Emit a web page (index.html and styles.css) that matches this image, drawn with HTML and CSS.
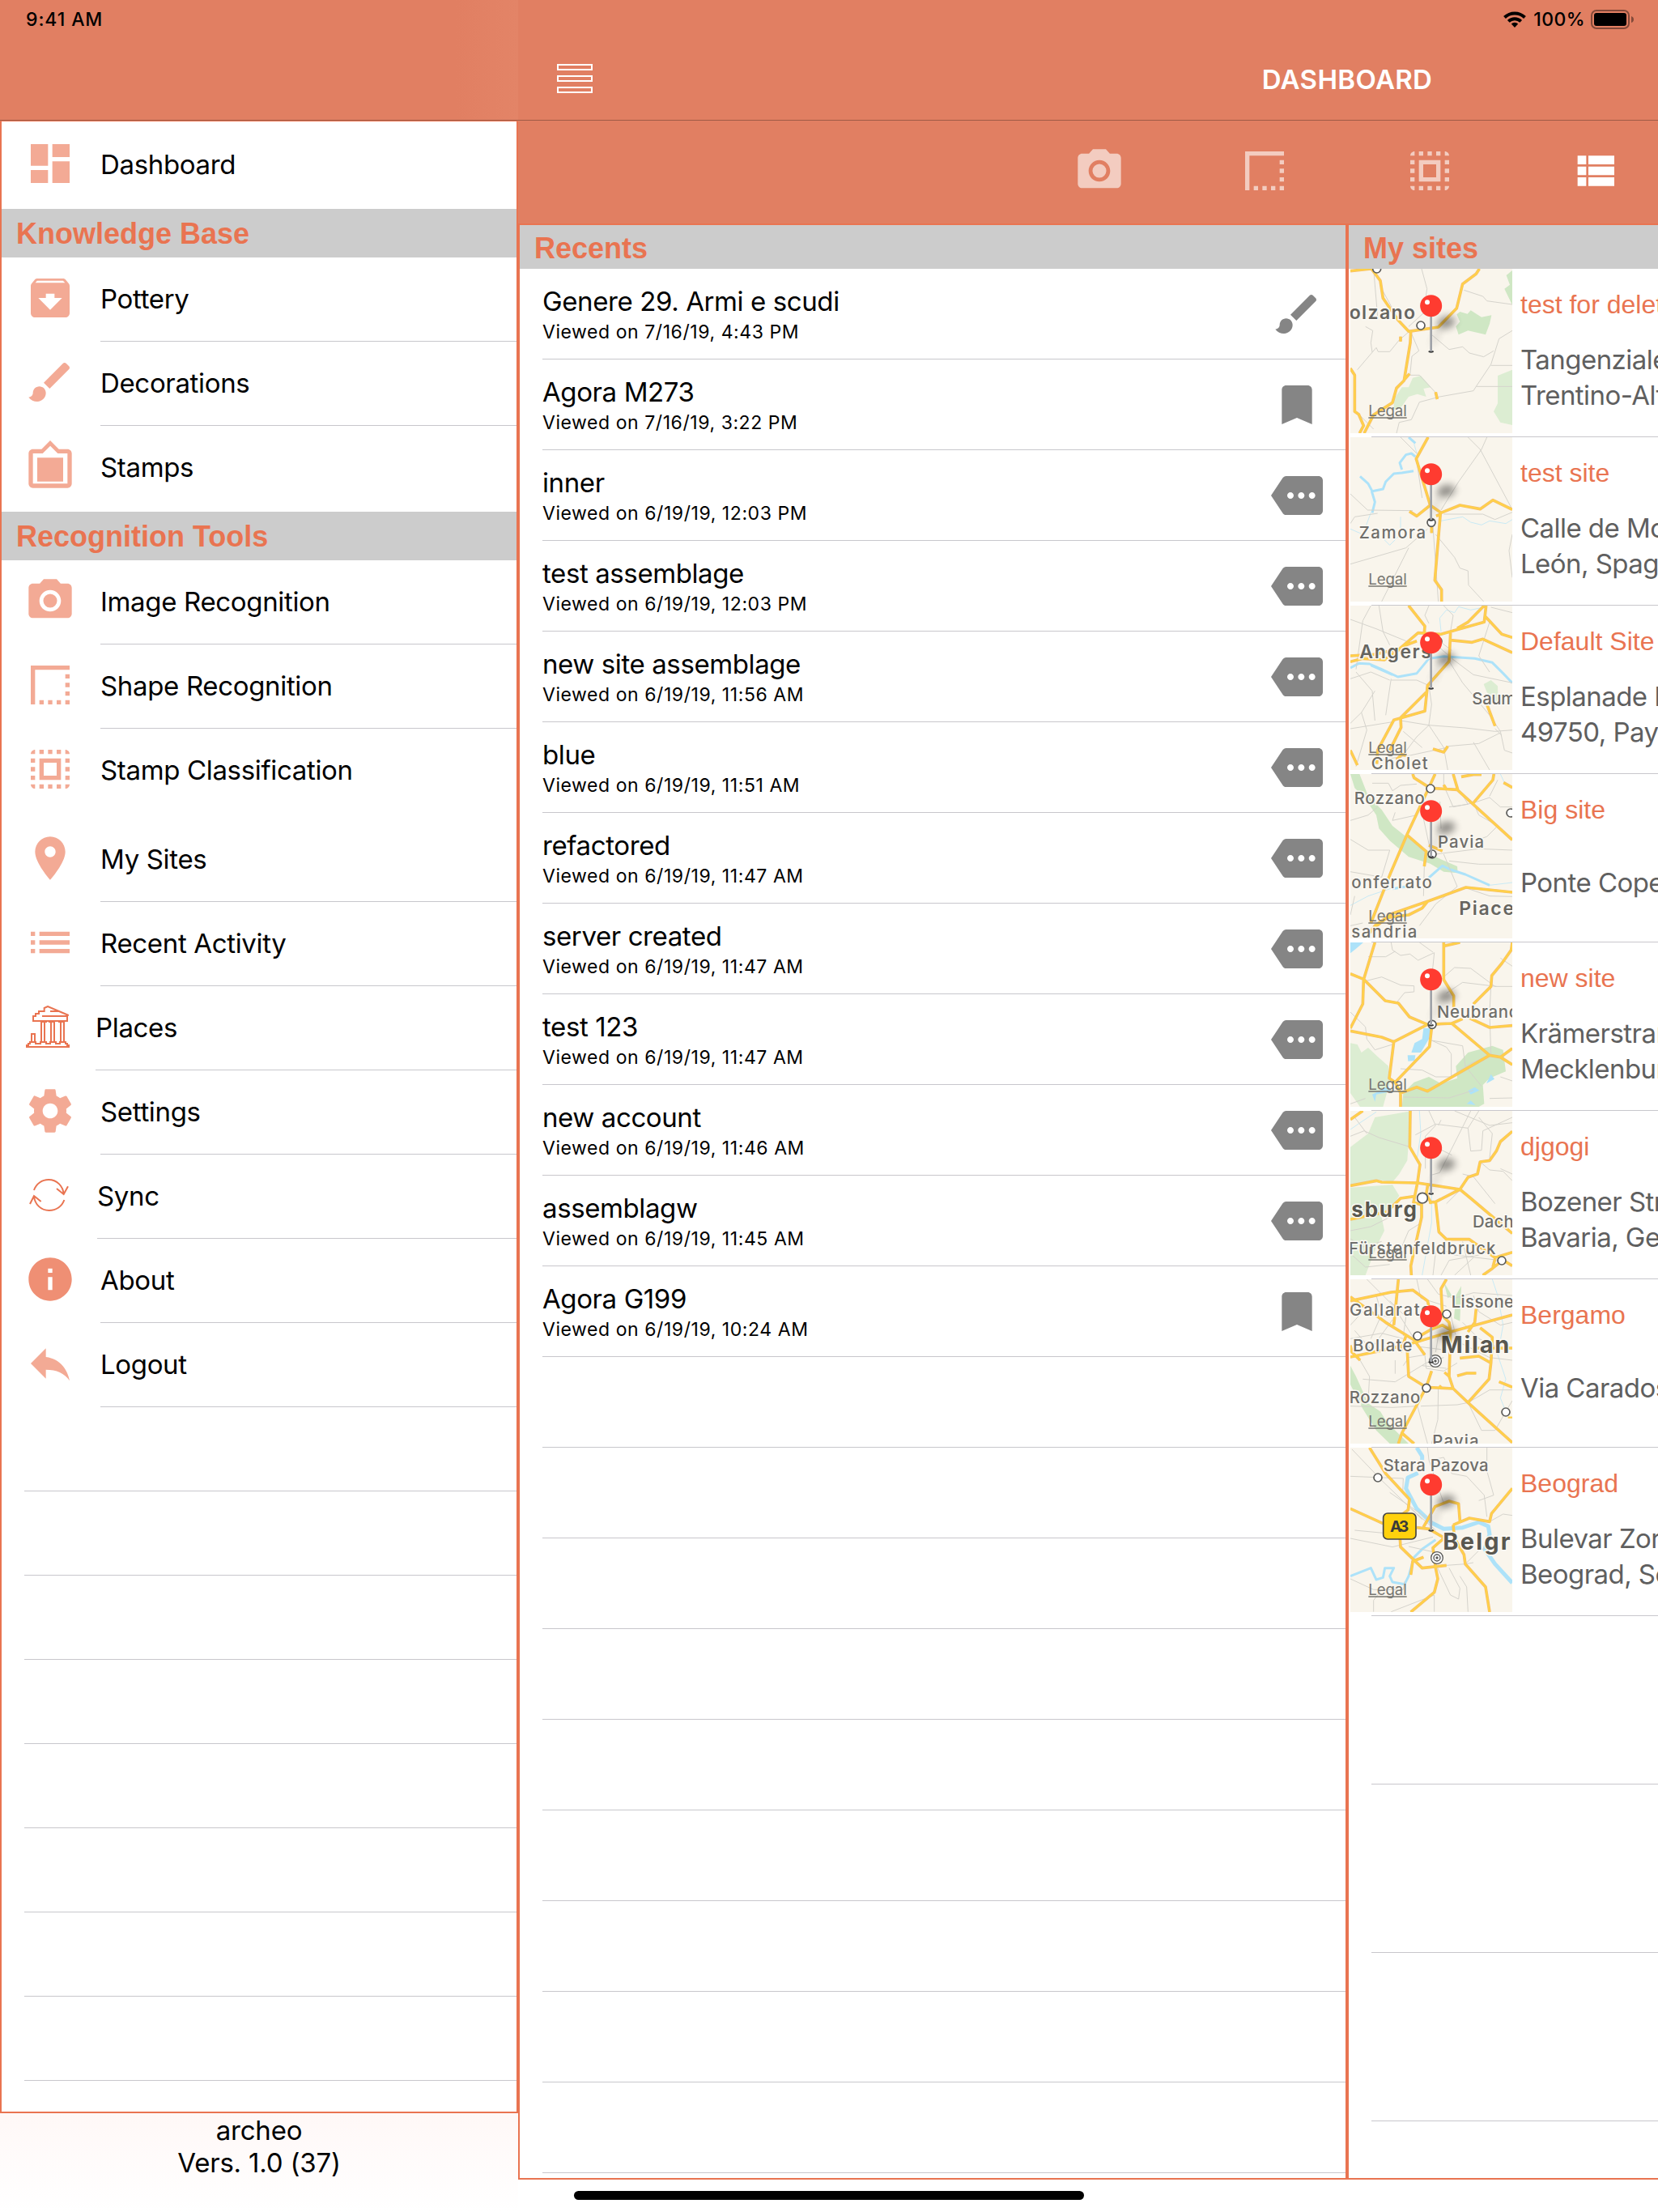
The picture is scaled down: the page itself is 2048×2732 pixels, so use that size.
FILE: index.html
```html
<!DOCTYPE html>
<html lang="en">
<head>
  <meta charset="UTF-8">
  <meta name="viewport" content="width=device-width, initial-scale=1.0">
  <title>Dashboard</title>
  <link rel="stylesheet" href="styles.css">
</head>
<body>

  <!-- Shared icons -->
  <svg class="defs" width="0" height="0">
    <defs>
      <filter id="blur" x="-100%" y="-150%" width="300%" height="400%"><feGaussianBlur stdDeviation="14"/></filter>

      <symbol id="i-dashboard" viewBox="0 0 24 24"><path d="M3 13h8V3H3v10zm0 8h8v-6H3v6zm10 0h8V11h-8v10zm0-18v6h8V3h-8z"/></symbol>
      <symbol id="i-archive" viewBox="0 0 24 24"><path d="M20.54 5.23l-1.39-1.68C18.88 3.21 18.47 3 18 3H6c-.47 0-.88.21-1.16.55L3.46 5.23C3.17 5.57 3 6.02 3 6.5V19c0 1.1.9 2 2 2h14c1.1 0 2-.9 2-2V6.5c0-.48-.17-.93-.46-1.27zM12 17.5L6.5 12H10v-2h4v2h3.5L12 17.5zM5.12 5l.81-1h12l.94 1H5.12z"/></symbol>
      <symbol id="i-brush" viewBox="0 0 24 24"><path d="M7 14c-1.66 0-3 1.34-3 3 0 1.31-1.16 2-2 2 .92 1.22 2.49 2 4 2 2.21 0 4-1.79 4-4 0-1.66-1.34-3-3-3zm13.71-9.37l-1.34-1.34c-.39-.39-1.02-.39-1.41 0L9 12.25 11.75 15l8.96-8.96c.39-.39.39-1.02 0-1.41z"/></symbol>
      <symbol id="i-frame" viewBox="0 0 24 24"><path d="M20 4h-4l-4-4-4 4H4c-1.1 0-2 .9-2 2v14c0 1.1.9 2 2 2h16c1.1 0 2-.9 2-2V6c0-1.1-.9-2-2-2zm0 16H4V6h4.52l3.52-3.5L15.48 6H20v14zM18 8H6v11h12"/></symbol>
      <symbol id="i-camera" viewBox="0 0 24 24"><circle cx="12" cy="12" r="3.2"/><path d="M9 2L7.17 4H4c-1.1 0-2 .9-2 2v12c0 1.1.9 2 2 2h16c1.1 0 2-.9 2-2V6c0-1.1-.9-2-2-2h-3.17L15 2H9zm3 15c-2.76 0-5-2.24-5-5s2.24-5 5-5 5 2.24 5 5-2.24 5-5 5z"/></symbol>
      <symbol id="i-shape" viewBox="0 0 24 24"><path d="M15 21h2v-2h-2v2zm4 0h2v-2h-2v2zM7 21h2v-2H7v2zm4 0h2v-2h-2v2zm8-4h2v-2h-2v2zm0-4h2v-2h-2v2zM3 3v18h2V5h16V3H3zm16 6h2V7h-2v2z"/></symbol>
      <symbol id="i-stamp" viewBox="0 0 24 24"><path d="M3 5h2V3c-1.1 0-2 .9-2 2zm0 8h2v-2H3v2zm4 8h2v-2H7v2zM3 9h2V7H3v2zm10-6h-2v2h2V3zm6 0v2h2c0-1.1-.9-2-2-2zM5 21v-2H3c0 1.1.9 2 2 2zm-2-4h2v-2H3v2zM9 3H7v2h2V3zm2 18h2v-2h-2v2zm8-8h2v-2h-2v2zm0 8c1.1 0 2-.9 2-2h-2v2zm0-12h2V7h-2v2zm0 8h2v-2h-2v2zm-4 4h2v-2h-2v2zm0-16h2V3h-2v2zM7 17h10V7H7v10zm2-8h6v6H9V9z"/></symbol>
      <symbol id="i-place" viewBox="0 0 24 24"><path d="M12 2C8.13 2 5 5.13 5 9c0 5.25 7 13 7 13s7-7.75 7-13c0-3.87-3.13-7-7-7zm0 9.5c-1.38 0-2.5-1.12-2.5-2.5s1.12-2.5 2.5-2.5 2.5 1.12 2.5 2.5-1.12 2.5-2.5 2.5z"/></symbol>
      <symbol id="i-list" viewBox="0 0 24 24"><path d="M3 13h2v-2H3v2zm0 4h2v-2H3v2zm0-8h2V7H3v2zm4 4h14v-2H7v2zm0 4h14v-2H7v2zM7 7v2h14V7H7z"/></symbol>
      <symbol id="i-settings" viewBox="0 0 24 24"><path d="M19.43 12.98c.04-.32.07-.64.07-.98s-.03-.66-.07-.98l2.11-1.65c.19-.15.24-.42.12-.64l-2-3.46c-.12-.22-.39-.3-.61-.22l-2.49 1c-.52-.4-1.08-.73-1.69-.98l-.38-2.65C14.46 2.18 14.25 2 14 2h-4c-.25 0-.46.18-.49.42l-.38 2.65c-.61.25-1.17.59-1.69.98l-2.49-1c-.23-.09-.49 0-.61.22l-2 3.46c-.13.22-.07.49.12.64l2.11 1.65c-.04.32-.07.65-.07.98s.03.66.07.98l-2.11 1.65c-.19.15-.24.42-.12.64l2 3.46c.12.22.39.3.61.22l2.49-1c.52.4 1.08.73 1.69.98l.38 2.65c.03.24.24.42.49.42h4c.25 0 .46-.18.49-.42l.38-2.65c.61-.25 1.17-.59 1.69-.98l2.49 1c.23.09.49 0 .61-.22l2-3.46c.12-.22.07-.49-.12-.64l-2.11-1.65zM12 15.5c-1.93 0-3.5-1.57-3.5-3.5s1.57-3.5 3.5-3.5 3.5 1.57 3.5 3.5-1.57 3.5-3.5 3.5z"/></symbol>
      <symbol id="i-info" viewBox="0 0 24 24"><path d="M12 2C6.48 2 2 6.48 2 12s4.48 10 10 10 10-4.48 10-10S17.52 2 12 2zm1 15h-2v-6h2v6zm0-8h-2V7h2v2z"/></symbol>
      <symbol id="i-reply" viewBox="0 0 24 24"><path d="M10 9V5l-7 7 7 7v-4.1c5 0 8.5 1.6 11 5.1-1-5-4-10-11-11z"/></symbol>
      <symbol id="i-viewlist" viewBox="0 0 24 24"><path d="M4 14h4v-4H4v4zm0 5h4v-4H4v4zM4 9h4V5H4v4zm5 5h12v-4H9v4zm0 5h12v-4H9v4zM9 5v4h12V5H9z"/></symbol>
      <symbol id="i-bookmark" viewBox="0 0 24 24"><path d="M17 3H7c-1.1 0-2 .9-2 2v16l7-3 7 3V5c0-1.1-.9-2-2-2z"/></symbol>
      <symbol id="i-more" viewBox="0 0 24 24"><path d="M22 3H7c-.69 0-1.23.35-1.59.88L0 12l5.41 8.11c.36.53.9.89 1.59.89h15c1.1 0 2-.9 2-2V5c0-1.1-.9-2-2-2zM9 13.5c-.83 0-1.5-.67-1.5-1.5s.67-1.5 1.5-1.5 1.5.67 1.5 1.5-.67 1.5-1.5 1.5zm5 0c-.83 0-1.5-.67-1.5-1.5s.67-1.5 1.5-1.5 1.5.67 1.5 1.5-.67 1.5-1.5 1.5zm5 0c-.83 0-1.5-.67-1.5-1.5s.67-1.5 1.5-1.5 1.5.67 1.5 1.5-.67 1.5-1.5 1.5z"/></symbol>

      <!-- Map pin -->
      <g id="pin">
        <text class="legal" x="67" y="547" textLength="142">Legal</text>
        <path d="M67 552h142" stroke="#777671" stroke-width="4"/>
        <ellipse cx="355" cy="199" rx="34" ry="22" transform="rotate(-14 355 199)" fill="#000" opacity=".42" filter="url(#blur)"/>
        <ellipse cx="318" cy="250" rx="10" ry="40" transform="rotate(24 318 250)" fill="#000" opacity=".12" filter="url(#blur)"/>
        <ellipse cx="299" cy="307" rx="10" ry="4" fill="#3c3c3c"/>
        <path d="M299 170v136" stroke="#9fa2a8" stroke-width="8"/>
        <circle cx="299" cy="137" r="40.5" fill="#ff3b30"/>
        <circle cx="285" cy="124" r="9" fill="#fff"/>
      </g>
      <g id="capital">
        <circle r="22" fill="#fff" stroke="#5a5a58" stroke-width="4"/>
        <circle r="12" fill="#fff" stroke="#5a5a58" stroke-width="4"/>
        <circle r="5" fill="#5a5a58"/>
      </g>
    </defs>
  </svg>

  <div class="screen">

    <div class="status">
      <span>9:41 AM</span>
      <div class="status-right">
        <svg width="28" height="21" viewBox="0 0 28 21" fill="none" stroke="#000" stroke-width="4">
          <path d="M1.5 7.5a18 18 0 0 1 25 0M6.3 12.4a11.2 11.2 0 0 1 15.4 0"/>
          <path d="M14 20l-4.2-4.6a6 6 0 0 1 8.4 0z" fill="#000" stroke="none"/>
        </svg>
        <span class="percent">100%</span>
        <svg width="54" height="24" viewBox="0 0 54 24">
          <rect x="1" y="1" width="46" height="22" rx="6" fill="none" stroke="#000" stroke-opacity=".42" stroke-width="2"/>
          <rect x="4" y="4" width="40" height="16" rx="3" fill="#000"/>
          <path d="M50 8q3 1 3 4t-3 4z" fill="#000" fill-opacity=".42"/>
        </svg>
      </div>
    </div>

    <aside class="sidebar">
      <div class="navbar"></div>

      <div class="menu">
        <div class="group">
          <div class="item"><svg class="icon"><use href="#i-dashboard"/></svg><span>Dashboard</span></div>
        </div>

        <h2>Knowledge Base</h2>
        <div class="group">
          <div class="item"><svg class="icon"><use href="#i-archive"/></svg><span>Pottery</span></div>
          <div class="item"><svg class="icon"><use href="#i-brush"/></svg><span>Decorations</span></div>
          <div class="item"><svg class="icon"><use href="#i-frame"/></svg><span>Stamps</span></div>
        </div>

        <h2>Recognition Tools</h2>
        <div class="group">
          <div class="item"><svg class="icon"><use href="#i-camera"/></svg><span>Image Recognition</span></div>
          <div class="item"><svg class="icon"><use href="#i-shape"/></svg><span>Shape Recognition</span></div>
          <div class="item"><svg class="icon"><use href="#i-stamp"/></svg><span>Stamp Classification</span></div>
        </div>

        <div class="group last">
          <div class="item"><svg class="icon"><use href="#i-place"/></svg><span>My Sites</span></div>
          <div class="item"><svg class="icon"><use href="#i-list"/></svg><span>Recent Activity</span></div>
          <div class="item places">
            <svg class="icon" viewBox="0 0 162 156">
              <path d="M27 57V39H36V30H48V21H68V9L81 3L158 36H153V57ZM60 39H156M90 21H120M54 60H78M84 60H108M120 60H144M57 63V133M69 63V133M93 63V133M105 63V133M129 63V133M141 63V133"/>
              <path d="M3 153H159V147H153V141H147V135H126V141H111V135H90V141H75V135H54V141H36V135H15V141H9V147H3ZM21 135V105H33V135"/>
            </svg>
            <span>Places</span>
          </div>
          <div class="item"><svg class="icon"><use href="#i-settings"/></svg><span>Settings</span></div>
          <div class="item sync">
            <svg class="icon" viewBox="0 0 156 120">
              <path d="M18 42C26 18 48 3 72 3C102 3 126 26 128 57M102 36L128 57L144 28M130 78C122 102 100 117 74 117C44 117 20 94 18 63M3 93L18 63L44 84"/>
            </svg>
            <span>Sync</span>
          </div>
          <div class="item about"><svg class="icon"><use href="#i-info"/></svg><span>About</span></div>
          <div class="item"><svg class="icon"><use href="#i-reply"/></svg><span>Logout</span></div>
        </div>

        <div class="empty"></div>
        <div class="empty"></div>
        <div class="empty"></div>
        <div class="empty"></div>
        <div class="empty"></div>
        <div class="empty"></div>
        <div class="empty"></div>
        <div class="empty"></div>
      </div>

      <div class="version">archeo<br>Vers. 1.0 (37)</div>
    </aside>

    <main class="main">
      <div class="navbar">
        <div class="hamburger"><i></i><i></i><i></i></div>
        <h1>DASHBOARD</h1>
      </div>

      <div class="toolbar">
        <svg class="icon"><use href="#i-camera"/></svg>
        <svg class="icon"><use href="#i-shape"/></svg>
        <svg class="icon"><use href="#i-stamp"/></svg>
        <svg class="icon active"><use href="#i-viewlist"/></svg>
      </div>

      <div class="panels">
        <section class="panel recents">
          <h2>Recents</h2>
          <div class="row"><div><b>Genere 29. Armi e scudi</b><small>Viewed on 7/16/19, 4:43 PM</small></div><svg class="icon"><use href="#i-brush"/></svg></div>
          <div class="row"><div><b>Agora M273</b><small>Viewed on 7/16/19, 3:22 PM</small></div><svg class="icon"><use href="#i-bookmark"/></svg></div>
          <div class="row"><div><b>inner</b><small>Viewed on 6/19/19, 12:03 PM</small></div><svg class="icon"><use href="#i-more"/></svg></div>
          <div class="row"><div><b>test assemblage</b><small>Viewed on 6/19/19, 12:03 PM</small></div><svg class="icon"><use href="#i-more"/></svg></div>
          <div class="row"><div><b>new site assemblage</b><small>Viewed on 6/19/19, 11:56 AM</small></div><svg class="icon"><use href="#i-more"/></svg></div>
          <div class="row"><div><b>blue</b><small>Viewed on 6/19/19, 11:51 AM</small></div><svg class="icon"><use href="#i-more"/></svg></div>
          <div class="row"><div><b>refactored</b><small>Viewed on 6/19/19, 11:47 AM</small></div><svg class="icon"><use href="#i-more"/></svg></div>
          <div class="row"><div><b>server created</b><small>Viewed on 6/19/19, 11:47 AM</small></div><svg class="icon"><use href="#i-more"/></svg></div>
          <div class="row"><div><b>test 123</b><small>Viewed on 6/19/19, 11:47 AM</small></div><svg class="icon"><use href="#i-more"/></svg></div>
          <div class="row"><div><b>new account</b><small>Viewed on 6/19/19, 11:46 AM</small></div><svg class="icon"><use href="#i-more"/></svg></div>
          <div class="row"><div><b>assemblagw</b><small>Viewed on 6/19/19, 11:45 AM</small></div><svg class="icon"><use href="#i-more"/></svg></div>
          <div class="row"><div><b>Agora G199</b><small>Viewed on 6/19/19, 10:24 AM</small></div><svg class="icon"><use href="#i-bookmark"/></svg></div>
          <div class="row"></div>
          <div class="row"></div>
          <div class="row"></div>
          <div class="row"></div>
          <div class="row"></div>
          <div class="row"></div>
          <div class="row"></div>
          <div class="row"></div>
          <div class="row"></div>
        </section>

        <section class="panel sites">
          <h2>My sites</h2>

          <div class="site">
            <svg class="map" viewBox="384 216 600 609">
              <path class="wood" d="M962 240L984 222V350L955 290L975 275ZM775 430L790 412L778 385L790 375L818 383L830 370L870 395L907 388L900 420L885 460L820 445L785 460Z"/>
              <path class="park" d="M545 700L575 655H600L615 620L645 612L683 655L655 660L665 690L632 680L600 690L575 725L545 738ZM930 612L984 590V795L940 785L915 745L930 715Z"/>
              <path class="road" d="M648 216L668 290L655 380L600 430M470 216L486 405M500 290L560 400M805 295L875 318L890 335L984 348M685 460L750 515L800 505L825 528L878 542L915 520M984 445L935 475L905 570L850 652L840 668L715 690L640 710L610 775L565 785L555 825M905 574H984M850 652H984M440 430L467 445L460 490L465 525M410 590L480 508L487 523H530L565 480L600 450M610 455L638 520L612 540L605 610H640L700 675M420 760L470 810"/>
              <g class="hw"><path id="h1" d="M384 224L460 216M462 216L495 260L505 325L560 405L600 448L710 432L778 362L800 272L850 235L862 216M608 450L606 490L583 630L555 658L540 712L470 757L435 825M583 628L603 605M384 585L400 610V745L415 755L433 797L418 825M570 467v18M700 673l6 26"/></g>
              <use href="#h1" class="hw-in"/>
              <g class="town"><circle cx="482" cy="216" r="15"/><circle cx="645" cy="426" r="15"/></g>
              <text class="city" x="380" y="402" textLength="244">olzano</text>
              <use href="#pin" x="384" y="216"/>
            </svg>
            <div class="info"><b>test for delete</b><p>Tangenziale Ovest<br>Trentino-Alto Adige</p></div>
          </div>

          <div class="site">
            <svg class="map" viewBox="384 840 600 609">
              <path class="water" d="M600 840L625 862M420 985L450 1012L465 1040L505 1032L515 1005L545 975L575 972L618 965M575 960L567 935L590 905L610 900L625 912M463 1040L475 1080L465 1120"/>
              <path class="stream" d="M384 1180L430 1200L460 1120M500 1210L530 1240L570 1200V1135M720 1150L800 1135L830 1155L870 1165L900 1150L960 1160L984 1145M620 865L632 905"/>
              <path class="road" d="M570 840L630 900M820 840L865 885L984 1108M890 840L870 885L785 1005L720 1110M384 1050L448 1110L615 1112M384 1160L400 1135L485 1122M384 1310L590 1250L670 1180M600 1250L500 1449M690 1170L710 1449M700 1200L770 1285L790 1325L820 1335L822 1388L878 1449M730 1125L875 1125L920 1145L984 1118M984 1200L972 1260L984 1360M630 930L650 1065"/>
              <g class="hw"><path id="h2" d="M672 840L628 920L680 1092L720 1120L790 1092L865 1106L912 1073L984 1108M603 1115L630 1132L680 1092M718 1120L697 1370L722 1405V1449M685 1150v45M702 1132L720 1125"/></g>
              <use href="#h2" class="hw-in"/>
              <g class="town"><circle cx="684" cy="1156" r="15"/></g>
              <text x="416" y="1214" textLength="247">Zamora</text>
              <use href="#pin" x="384" y="840"/>
            </svg>
            <div class="info"><b>test site</b><p>Calle de Monsalve<br>León, Spagna</p></div>
          </div>

          <div class="site">
            <svg class="map" viewBox="84 54 600 609">
              <path class="park" d="M578 345L605 330L630 352L632 420L590 375Z"/>
              <path class="water" d="M84 285L115 268L155 270L200 290L260 318L330 305L375 250L430 242L545 250L610 265L650 305L684 340M160 275L240 310"/>
              <path class="stream" d="M420 150L415 100L440 70L470 80L485 58L530 70L580 60"/>
              <path class="road" d="M160 54L130 110L105 290M190 54L205 150L230 200M84 105L180 140L290 185M375 54L360 90L375 120M430 54L465 90L455 150M605 60L684 80M600 115L560 240L600 300M230 330L160 300L84 325M105 300L165 370L175 480M235 325L215 460M235 330H330L375 350M375 350L385 420L375 495M84 490L125 450L175 370M125 450L145 515L105 650M84 510L240 485M270 480L375 497L510 507L620 520L684 515M375 497L330 540L270 620M375 497L430 580L445 663M445 575L560 565L640 525M440 580L300 610L200 625M450 260L500 340L600 460L640 520L655 590L684 600M460 250L540 310L684 340M540 560L600 663M280 520L350 580M620 510L645 535M420 190L460 220M415 210L450 240"/>
              <g class="hw"><path id="h3" d="M300 54L360 130L358 155M84 240L170 235L265 215L335 155L420 160L580 115L587 54M455 155L450 260L370 350L360 445L245 478L185 590L182 640M480 138L520 115L580 54M585 95L645 160L684 172M455 182L535 190L575 178L684 228M84 262L130 250L210 255L290 200L330 185M365 375L270 470L272 505L230 590M590 420L620 500M84 590L110 645M390 585L430 597L445 575M255 625L275 605L290 610"/></g>
              <use href="#h3" class="hw-in"/>
              <g class="town"><circle cx="409" cy="186" r="14"/></g>
              <text class="city" x="118" y="250" textLength="266">Angers</text>
              <text x="535" y="420" textLength="162">Saum</text>
              <text x="161" y="660" textLength="210">Cholet</text>
              <use href="#pin" x="84" y="54"/>
            </svg>
            <div class="info"><b>Default Site</b><p>Esplanade Lac<br>49750, Pays de la Loire</p></div>
          </div>

          <div class="site">
            <svg class="map" viewBox="84 678 600 609">
              <path class="wood" d="M84 678H118L150 760L200 810L240 870L290 910L340 940L400 985L480 1020L482 1045L430 1040L380 1010L300 985L230 925L190 880L180 830L140 770L100 730Z"/>
              <path class="water" d="M240 1103L290 1095M375 1062L425 1018L455 1032L510 1050L600 1090"/>
              <path class="stream" d="M84 1165L150 1130L240 1100M600 1090L684 1080M640 678L655 710"/>
              <path class="road" d="M84 850L150 830L185 800M165 712L225 712L240 740L270 720L330 715M430 678V720L465 800L540 785M250 820L240 850L330 830M350 820L378 950M84 920L150 960L230 960L200 1060L84 1040M100 1130L84 1200M480 736L540 785L600 765L640 800L684 800M540 785L560 830L630 870L590 910L560 920M400 975L560 955L684 960M430 975L480 1095L400 1160L340 1240M450 1000L560 1012L684 1012M358 1020L355 1130M512 1100L600 1130L684 1132M490 740L520 790L450 800M630 700L600 760M416 780L420 880M84 1240L130 1230"/>
              <g class="hw"><path id="h4" d="M315 678L320 692L380 730L480 736L684 922M398 678L365 750L295 900L235 1040L160 1230M465 678L482 736M430 718L440 735M495 688L540 680H570M616 678L612 700L540 785M652 710L684 728M295 905L365 965L358 1020M375 942L425 963M140 1287L175 1240L240 1195L370 1150L512 1098L684 1116M370 1150L350 1175L300 1200L220 1210L170 1250"/></g>
              <use href="#h4" class="hw-in"/>
              <g class="town"><circle cx="381" cy="732" r="15"/><circle cx="387" cy="975" r="15"/><circle cx="678" cy="822" r="15"/></g>
              <text x="98" y="788" textLength="261">Rozzano</text>
              <text x="408" y="951" textLength="171">Pavia</text>
              <text x="88" y="1100" textLength="298">onferrato</text>
              <text class="city" x="487" y="1200" textLength="203">Piace</text>
              <text x="88" y="1283" textLength="243">sandria</text>
              <use href="#pin" x="84" y="678"/>
            </svg>
            <div class="info"><b>Big site</b><p>Ponte Coperto</p></div>
          </div>

          <div class="site">
            <svg class="map" viewBox="84 42 600 609">
              <path class="park" d="M84 415L110 420L125 450L150 432L185 465L225 500L230 560L205 651H120L84 600Z"/>
              <path class="wood" d="M280 600L320 560L375 540L420 565L480 545L475 500L520 450L610 425L650 440L660 520L600 545L575 570L580 640L560 651H275Z"/>
              <path class="lake" d="M84 42H132L105 65L84 82ZM355 360H382L375 400L345 450H310L322 415L350 400ZM296 460L325 460L322 480L298 482ZM520 592L545 578L562 590L530 605ZM588 565L605 530L618 548ZM515 640L530 628L548 645ZM165 605L225 575L235 595L180 605L175 632Z"/>
              <path class="road" d="M235 42L240 70L270 90L305 85L335 108L395 80L390 130L380 200M340 42L390 78M150 95H215L250 75M140 185L200 170L270 200L320 203V225L285 228L255 265M380 220L430 170L470 135L530 138L620 205L684 205M440 230L500 190L625 205M605 205L600 300L605 460M84 300L140 355L145 400L175 440L240 420M385 405L440 430L458 455V540M385 405L500 425L510 500L570 575M270 510L350 515L400 540H455L530 490L600 460M84 640L140 620M640 540L684 555M280 615L450 618L540 590M600 620L684 618M640 100L684 130"/>
              <g class="hw"><path id="h5" d="M175 42L133 180L130 270L84 360M84 158L133 178L213 258L262 267L303 318L370 346L460 342L500 325M430 42V180L467 240V285M430 55L490 42M684 42L680 70L645 120L608 165L605 205L540 270M460 342L600 460L640 467L684 495M684 435L640 467M600 460L370 593L330 578L270 600V651M84 370L200 393L245 410L370 346M385 360L377 428L250 560L228 545L245 410M250 560L270 600M525 322L600 357L684 350"/></g>
              <use href="#h5" class="hw-in"/>
              <g class="town"><circle cx="387" cy="346" r="15"/></g>
              <text x="405" y="320" textLength="304">Neubrand</text>
              <use href="#pin" x="84" y="42"/>
            </svg>
            <div class="info"><b>new site</b><p>Krämerstraße<br>Mecklenburg</p></div>
          </div>

          <div class="site">
            <svg class="map" viewBox="84 666 600 609">
              <path class="park" d="M175 690L300 668V780L295 850L265 900L240 930L180 920L84 940V800L150 750ZM84 950L240 940L265 980L240 1020L200 1060L210 1110L180 1170L140 1275H84Z"/>
              <path class="stream" d="M340 666L345 750L330 850M385 950V1080L350 1275M84 735L120 710L180 670"/>
              <path class="road" d="M84 760L135 740L190 765L300 798M100 690L145 750M375 666L400 720L362 760V880M325 755L400 715L520 730L560 666M530 666L415 895L380 905M520 730L530 815L570 812L575 740L684 690M470 666L600 720L684 710M400 800L460 830M410 720L420 700M560 690L610 750L600 840M565 855L600 885L650 890L684 925M500 900L540 910L620 1010M490 960L440 1010M84 1110L160 1095L230 1060M84 1140L130 1170L200 1150M90 1200L140 1245L230 1235M400 1170L470 1200L640 1220M420 1275L450 1220L560 1200L600 1160M470 1275L540 1210M500 1150L530 1275M348 1080L300 1110L270 1180M440 1142L400 1190L390 1275M684 900L640 880"/>
              <g class="hw"><path id="h6" d="M84 698L130 666M306 666L304 800L342 865L333 930L318 1005L350 1015M84 943L180 925L200 930L333 933L490 957L530 990L684 1120M684 742L640 780L625 815L600 850L565 855L555 900L520 912L490 957L400 1003L375 1005M84 1068L220 1040L270 990L320 983M348 1010V1060L308 1240L310 1275M400 1003L412 1115L440 1142H525L620 1210L684 1190M372 935L365 975L385 1010M645 1222L610 1250L575 1275M620 1215L612 1245M660 1225L684 1240"/></g>
              <use href="#h6" class="hw-in"/>
              <g class="town"><circle cx="351" cy="989" r="19"/><circle cx="645" cy="1221" r="15"/></g>
              <text class="city dark" x="88" y="1058" textLength="242">sburg</text>
              <text x="537" y="1098" textLength="152">Dach</text>
              <text x="78" y="1196" textLength="544">Fürstenfeldbruck</text>
              <use href="#pin" x="84" y="666"/>
            </svg>
            <div class="info"><b>djgogi</b><p>Bozener Straße<br>Bavaria, Germania</p></div>
          </div>

          <div class="site">
            <svg class="map" viewBox="84 30 600 609">
              <path class="wood" d="M84 350L105 390L150 490L195 520L220 560L300 639H230L180 590L130 510L84 420ZM430 40L460 90L445 100ZM475 90L495 55L490 185L468 175Z"/>
              <path class="stream" d="M610 30L630 90L650 200L630 310L660 400L640 470L660 520"/>
              <path class="road" d="M145 30L245 130L320 250M330 30L345 100L440 130M370 30L410 85L470 100L540 80L684 90M84 200L130 150L230 170M100 220L160 290L240 180M84 250L200 230L280 250M540 90L560 150L640 200L684 190M500 190L560 250L650 290M455 160L480 260L600 320L684 330M120 330L155 390L150 480M130 400L250 410L365 340L430 320M280 350L300 320L360 310M360 310L365 360L430 370L480 340M330 490L370 639M410 430L408 550L385 639M345 500L480 495L520 487L600 440L684 440M520 487L570 590L620 590L660 520L684 480M250 330L250 380M410 240L400 300M180 90L200 160L160 250M230 110L290 170L280 240M84 500L240 505L330 500M340 280L420 290M350 350L440 360"/>
              <g class="hw"><path id="h7" d="M84 110L235 78L315 70L370 110L382 160M262 30L245 200M84 95L215 190L320 255L360 310M440 30L420 65L425 165L450 190L455 225M320 265L455 225L684 162M550 140L545 190L520 225M320 255L350 235L385 215L425 200L450 215M455 225L450 390L465 435L520 487L684 635M84 318L220 290L320 265M84 275L90 300L120 330M295 295L300 390L365 430L462 435M565 210L610 245L605 340L598 400L520 487M490 322L560 315L605 340M480 388L515 378H550M385 370L365 430L275 600L262 639M275 600L320 639M635 410L684 430M540 285H684M433 375L450 390M413 425L425 435M270 300L290 240"/></g>
              <use href="#h7" class="hw-in"/>
              <path class="hw-in" d="M668 542H684"/>
              <g class="town"><circle cx="441" cy="159" r="15"/><circle cx="333" cy="240" r="15"/><circle cx="366" cy="433" r="15"/><circle cx="660" cy="522" r="15"/></g>
              <use href="#capital" x="399" y="333"/>
              <text x="81" y="165" textLength="300">Gallarate</text>
              <text x="458" y="135" textLength="232">Lissone</text>
              <text x="93" y="297" textLength="220">Bollate</text>
              <text class="metro" x="419" y="302" textLength="254">Milan</text>
              <text x="80" y="488" textLength="263">Rozzano</text>
              <text x="388" y="650" textLength="172">Pavia</text>
              <use href="#pin" x="84" y="30"/>
            </svg>
            <div class="info"><b>Bergamo</b><p>Via Caradosso</p></div>
          </div>

          <div class="site">
            <svg class="map" viewBox="84 654 600 609">
              <path class="water wide" d="M330 654L350 685V700M335 748L297 765L290 805L330 880L385 932L430 955L500 950L560 930L595 945L600 975L582 1030L620 1085L684 1155"/>
              <path class="water" d="M400 995L350 1030L320 1060L300 1130L285 1160L240 1152L230 1130L245 1100H212L205 1135L180 1143L160 1100L84 1130"/>
              <path class="road" d="M90 660L200 775L350 920M84 760L280 768L278 820M370 654L375 700L430 860M380 700L430 690L460 750L515 760L580 830L590 910M590 654V740L615 830L560 850M84 990L240 1022L390 985M100 960L205 970M390 1040L300 1020M84 1140L170 1180H280L285 1150M170 1262V1220L200 1180M235 1262L395 1200V1262M405 1095L455 1200L485 1215L490 1175L450 1100M440 1090L510 1085L560 1035L590 1025M490 1130L515 1170L520 1262M510 1085L540 1080M600 928L650 900L684 905M230 820L390 930M310 880L400 960"/>
              <g class="hw"><path id="h8" d="M155 654L215 750L303 845L298 885L250 920M84 880L205 935M330 950L375 955L435 990M355 948L398 872L450 852L485 862L490 925M465 940L525 915L600 928L607 898L684 805M465 940L470 990L505 1050L510 1085L585 1170L600 1263M268 990L270 1022L350 1100L440 1090M355 1060L315 1075L308 1125M430 990L390 1025L400 1100L408 1140L395 1190L308 1263"/></g>
              <use href="#h8" class="hw-in"/>
              <g class="town"><circle cx="186" cy="765" r="15"/></g>
              <use href="#capital" x="405" y="1062"/>
              <rect x="206" y="897" width="121" height="96" rx="16" fill="#ffd10d" stroke="#444" stroke-width="5"/>
              <text class="shield" x="231" y="965" textLength="70">A3</text>
              <text x="206" y="740" textLength="390">Stara Pazova</text>
              <text class="metro" x="427" y="1032" textLength="250">Belgr</text>
              <use href="#pin" x="84" y="654"/>
            </svg>
            <div class="info"><b>Beograd</b><p>Bulevar Zorana<br>Beograd, Serbia</p></div>
          </div>

          <div class="site"></div>
          <div class="site"></div>
          <div class="site"></div>
          <div class="site"></div>
        </section>
      </div>
    </main>

    <div class="home-indicator"></div>
  </div>

</body>
</html>
```

FILE: styles.css
```css
* {
  box-sizing: border-box;
  margin: 0;
  padding: 0;
}

body {
  font-family: Inter, "Liberation Sans", sans-serif;
  background-color: #fff;
  color: #000;
}

.defs {
  position: absolute;
}

.screen {
  position: relative;
  display: flex;
  width: 2048px;
  height: 2732px;
  overflow: hidden;
}

.icon {
  display: block;
  flex: none;
  width: 64px;
  height: 64px;
  fill: currentColor;
}

h2 {
  font-family: "Liberation Sans", Arial, sans-serif;
  font-size: 36px;
  font-weight: bold;
  color: #e97451;
  background-color: #ccc;
}

/* Status bar */
.status {
  position: absolute;
  z-index: 1;
  top: 0;
  left: 0;
  right: 0;
  height: 48px;
  padding: 0 29px 0 32px;
  display: flex;
  justify-content: space-between;
  align-items: center;
  font-size: 23px;
  font-weight: 500;
  letter-spacing: 0.9px;
}

.status-right {
  display: flex;
  align-items: center;
}

.percent {
  margin: 0 7px 0 9px;
  letter-spacing: 0.4px;
}

/* Top bar */
.navbar {
  flex: none;
  height: 149px;
  background-color: #e17f62;
  border-bottom: 1px solid #9f5a46;
}

.sidebar .navbar {
  background-image: linear-gradient(to right, #e17f62 88%, #e38467);
}

.main .navbar {
  position: relative;
  display: flex;
  align-items: center;
  justify-content: center;
  padding-top: 47px;
}

.navbar h1 {
  font-size: 33px;
  font-weight: 600;
  color: #fff;
  letter-spacing: 0.35px;
}

.hamburger {
  position: absolute;
  left: 48px;
  top: 79px;
  display: flex;
  flex-direction: column;
  gap: 6px;
}

.hamburger i {
  width: 44px;
  height: 8px;
  border: 2px solid #fff;
}

/* Sidebar */
.sidebar {
  flex: none;
  width: 640px;
  display: flex;
  flex-direction: column;
  background: linear-gradient(#fff8f7 2610px, #fff 2732px);
}

.menu {
  height: 2461px;
  border: 2px solid #e97451;
  border-top-width: 1px;
  background-color: #fff;
  overflow: hidden;
}

.menu h2 {
  height: 60px;
  line-height: 62px;
  padding-left: 18px;
}

.group {
  padding: 2px 0;
}

.menu h2 + .group {
  padding-top: 0;
}

.menu .last {
  padding: 4px 0 0;
}

.item {
  display: flex;
  align-items: center;
  height: 104px;
  padding-left: 28px;
  color: #f3aa95;
}

.item .icon {
  margin-bottom: 4px;
}

.item span {
  flex: 1;
  height: 104px;
  line-height: 103px;
  margin-left: 30px;
  font-size: 33px;
  letter-spacing: -0.34px;
  color: #000;
  border-bottom: 1px solid #c8c7cc;
}

.group:not(.last) .item:last-child span {
  border-bottom: none;
}

.places .icon,
.sync .icon {
  fill: none;
  stroke: #e97451;
  stroke-width: 6;
}

.places .icon {
  width: 54px;
  height: 52px;
  margin-left: 2px;
}

.places span {
  margin-left: 32px;
}

.sync .icon {
  width: 52px;
  height: 40px;
  margin-left: 6px;
}

.about {
  color: #ef8f74;
}

.sync span {
  margin-left: 32px;
}

.empty {
  height: 104px;
  margin-left: 28px;
  border-bottom: 1px solid #c8c7cc;
}

.version {
  padding-top: 1px;
  text-align: center;
  font-size: 33px;
  line-height: 40px;
  letter-spacing: -0.2px;
}

/* Main area, slides off the right edge while the sidebar is open */
.main {
  flex: none;
  width: 2048px;
  height: 2692px;
  display: flex;
  flex-direction: column;
}

.toolbar {
  flex: none;
  display: flex;
  gap: 140px;
  height: 127px;
  padding: 30px 0 0 686px;
  background-color: #e17f62;
  color: #f3ccc0;
}

.toolbar .active {
  color: #fff;
}

.panels {
  flex: 1;
  min-height: 0;
  display: flex;
}

.panel {
  width: 1024px;
  border: 2px solid #e97451;
  background-color: #fff;
  overflow: hidden;
}

.panel h2 {
  height: 54px;
  line-height: 58px;
  padding-left: 18px;
}

.row {
  display: flex;
  align-items: center;
  justify-content: space-between;
  height: 112px;
  margin-left: 28px;
  padding-right: 28px;
  border-bottom: 1px solid #c8c7cc;
}

.row .icon {
  color: #858585;
}

.row b {
  display: block;
  padding-top: 2px;
  font-size: 33px;
  line-height: 40px;
  font-weight: 400;
  letter-spacing: -0.4px;
}

.row small {
  display: block;
  padding-top: 3px;
  font-size: 23px;
  line-height: 30px;
  letter-spacing: 0.56px;
}

/* Sites */
.site {
  position: relative;
  display: flex;
  height: 208px;
  padding-left: 2px;
}

.site::after {
  content: "";
  position: absolute;
  left: 28px;
  right: 0;
  bottom: 0;
  height: 1px;
  background-color: #c8c7cc;
}

.info {
  padding: 24px 0 0 10px;
  white-space: nowrap;
}

.info b {
  display: block;
  font-family: "Liberation Sans", Arial, sans-serif;
  font-size: 32px;
  font-weight: 400;
  line-height: 40px;
  color: #e97451;
}

.info p {
  display: flex;
  align-items: center;
  height: 100px;
  margin-top: 20px;
  font-size: 33px;
  line-height: 44px;
  letter-spacing: -0.55px;
  color: #5f5f5f;
}

/* Map thumbnails */
.map {
  flex: none;
  width: 200px;
  height: 203px;
  background-color: #f9f5ec;
}

.map .park {
  fill: #dcedd2;
}

.map .wood {
  fill: #cfe7c4;
}

.map .lake {
  fill: #ade2f9;
}

.map .water,
.map .stream,
.map .road,
.map .hw,
.map .hw-in {
  fill: none;
  stroke-linejoin: round;
}

.map .water {
  stroke: #ade2f9;
  stroke-width: 9;
}

.map .wide {
  stroke-width: 15;
}

.map .stream {
  stroke: #c9eaf5;
  stroke-width: 3;
}

.map .road {
  stroke: #d5d3cc;
  stroke-width: 3;
}

.map .hw {
  stroke: #f6bd6d;
  stroke-width: 11;
}

.map .hw-in {
  stroke: #ffd149;
  stroke-width: 7;
}

.map .town {
  fill: #fff;
  stroke: #5a5a58;
  stroke-width: 5;
}

.map text {
  font-size: 61px;
  font-weight: 500;
  fill: #6f6e6a;
  stroke: #fbf9f4;
  stroke-width: 9;
  paint-order: stroke;
}

.map .city {
  font-size: 69px;
  font-weight: 600;
  fill: #666560;
}

.map .dark {
  font-size: 78px;
  font-weight: 700;
  fill: #59574f;
}

.map .metro {
  font-size: 87px;
  font-weight: 700;
  fill: #59574f;
}

.map .shield {
  font-size: 58px;
  font-weight: 700;
  fill: #3a3a3a;
  stroke: none;
}

#pin .legal {
  font-size: 56px;
  fill: #777671;
}

.home-indicator {
  position: absolute;
  left: 709px;
  bottom: 15px;
  width: 630px;
  height: 11px;
  border-radius: 6px;
  background-color: #000;
}
```
